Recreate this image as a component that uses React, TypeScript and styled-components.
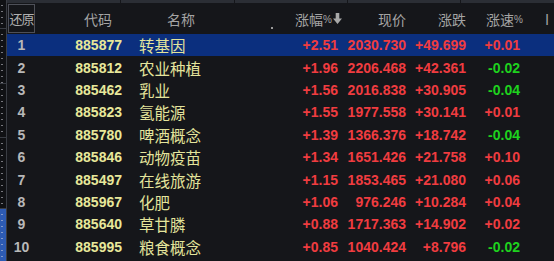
import React from 'react';
import styled, { createGlobalStyle } from 'styled-components';

type Row = {
  code: string;
  name: string;
  pct: string;
  price: string;
  change: string;
  speed: string;
};

const rows: Row[] = [
  { code: '885877', name: '转基因', pct: '+2.51', price: '2030.730', change: '+49.699', speed: '+0.01' },
  { code: '885812', name: '农业种植', pct: '+1.96', price: '2206.468', change: '+42.361', speed: '-0.02' },
  { code: '885462', name: '乳业', pct: '+1.56', price: '2016.838', change: '+30.905', speed: '-0.04' },
  { code: '885823', name: '氢能源', pct: '+1.55', price: '1977.558', change: '+30.141', speed: '+0.01' },
  { code: '885780', name: '啤酒概念', pct: '+1.39', price: '1366.376', change: '+18.742', speed: '-0.04' },
  { code: '885846', name: '动物疫苗', pct: '+1.34', price: '1651.426', change: '+21.758', speed: '+0.10' },
  { code: '885497', name: '在线旅游', pct: '+1.15', price: '1853.465', change: '+21.080', speed: '+0.06' },
  { code: '885967', name: '化肥', pct: '+1.06', price: '976.246', change: '+10.284', speed: '+0.04' },
  { code: '885640', name: '草甘膦', pct: '+0.88', price: '1717.363', change: '+14.902', speed: '+0.02' },
  { code: '885995', name: '粮食概念', pct: '+0.85', price: '1040.424', change: '+8.796', speed: '-0.02' },
];

const COLS = '28px 87px 168px 48px 68px 60px 54px 1fr';

const GlobalStyle = createGlobalStyle`
  html, body {
    margin: 0;
    padding: 0;
    background: #15161a;
    overflow: hidden;
  }
`;

const App: React.FC = () => {
  return (
    <>
      <GlobalStyle />
      <Screen>
        <LeftStrip>
          <StripSeg $h={28} />
          <StripSeg $h={54} />
          <StripSeg $h={53} />
          <StripSeg $h={70} />
          <StripSeg $h={56} $active />
        </LeftStrip>
        <Main>
          <TopBar>
            <TopSeg $w={113} />
            <TopSeg $w={113} />
            <TopSeg $w={112} />
            <TopSeg $w={112} />
            <TopSeg $w={97} />
          </TopBar>
          <HeaderRow>
            <ResetBox>还原</ResetBox>
            <HeadCell $inset={10}>代码</HeadCell>
            <HeadCell $left $pl={45}>
              名称
              <ResizeDot />
            </HeadCell>
            <HeadCell $shift={4}>
              涨幅<Small>%</Small>
              <ArrowDown viewBox="0 0 10 12">
                <path d="M3 0h4v6h3L5 12 0 6h3z" fill="#a8a8a8" />
              </ArrowDown>
            </HeadCell>
            <HeadCell>现价</HeadCell>
            <HeadCell>涨跌</HeadCell>
            <HeadCell $shift={3}>
              涨速<Small>%</Small>
            </HeadCell>
            <HeadCell $left $pl={25}>I</HeadCell>
          </HeaderRow>
          {rows.map((r, i) => (
            <DataRow key={r.code} $selected={i === 0}>
              <IndexCell>{i + 1}</IndexCell>
              <CodeCell>{r.code}</CodeCell>
              <NameCell>{r.name}</NameCell>
              <NumCell $color={colorOf(r.pct)}>{r.pct}</NumCell>
              <NumCell $color={colorOf(r.change)}>{r.price}</NumCell>
              <NumCell $color={colorOf(r.change)}>{r.change}</NumCell>
              <NumCell $color={colorOf(r.speed)}>{r.speed}</NumCell>
              <span />
            </DataRow>
          ))}
        </Main>
      </Screen>
    </>
  );
};

const colorOf = (v: string) => (v.startsWith('-') ? '#1ed21e' : '#f03c40');

const Screen = styled.div`
  display: flex;
  width: 554px;
  height: 261px;
  background: #15161a;
  overflow: hidden;
`;

const LeftStrip = styled.div`
  width: 6px;
  flex: none;
  display: flex;
  flex-direction: column;
  border-right: 1px solid #3a3d44;
  background: #101114;
`;

const StripSeg = styled.div<{ $h: number; $active?: boolean }>`
  height: ${({ $h }) => $h}px;
  flex: none;
  border-bottom: 1px solid #3a3d44;
  background: ${({ $active }) => ($active ? '#2d5bb4' : 'transparent')};
  background-image: repeating-linear-gradient(
    to bottom,
    transparent 0 5px,
    rgba(220, 220, 230, 0.5) 5px 6px
  );
  background-size: 2px 100%;
  background-repeat: no-repeat;
  background-position: 1px 0;
`;

const Main = styled.div`
  flex: 1;
  display: flex;
  flex-direction: column;
`;

const TopBar = styled.div`
  display: flex;
  height: 3px;
  background: #2b2e35;
`;

const TopSeg = styled.div<{ $w: number }>`
  width: ${({ $w }) => $w}px;
  border-right: 1px solid #15161a;
`;

const HeaderRow = styled.div`
  display: grid;
  grid-template-columns: ${COLS};
  height: 31px;
  align-items: stretch;
  font-family: 'Noto Sans CJK SC', 'Liberation Sans', sans-serif;
  font-size: 14px;
  color: #a4a4a4;
`;

const ResetBox = styled.div`
  margin: 1px 0 1px 1px;
  border: 1px solid #4e5058;
  display: flex;
  align-items: center;
  justify-content: center;
  font-size: 13px;
  letter-spacing: -1px;
  color: #b0b0b0;
`;

const HeadCell = styled.div<{ $left?: boolean; $pl?: number; $inset?: number; $shift?: number }>`
  position: relative;
  display: flex;
  align-items: center;
  justify-content: ${({ $left }) => ($left ? 'flex-start' : 'flex-end')};
  padding-left: ${({ $pl }) => $pl ?? 0}px;
  padding-right: ${({ $inset }) => $inset ?? 0}px;
  margin-right: ${({ $shift }) => -($shift ?? 0)}px;
  white-space: nowrap;
`;

const Small = styled.span`
  font-size: 10px;
  font-family: 'Liberation Sans', sans-serif;
  margin-top: 2px;
`;

const ArrowDown = styled.svg`
  width: 9px;
  height: 11px;
  margin-left: 1px;
`;

const ResizeDot = styled.span`
  position: absolute;
  right: 17px;
  bottom: 5px;
  width: 2px;
  height: 2px;
  background: #9a9a9a;
`;

const DataRow = styled.div<{ $selected?: boolean }>`
  display: grid;
  grid-template-columns: ${COLS};
  height: 22.4px;
  align-items: center;
  background: ${({ $selected }) => ($selected ? '#0b2f7e' : 'transparent')};
  font-family: 'Liberation Sans', Arial, sans-serif;
  font-weight: 700;
  font-size: 14px;
  white-space: nowrap;
`;

const IndexCell = styled.span`
  text-align: center;
  color: #b8b8b8;
  padding-left: 1px;
`;

const CodeCell = styled.span`
  text-align: right;
  color: #e8e89a;
`;

const NameCell = styled.span`
  padding-left: 17px;
  font-family: 'Noto Sans CJK SC', sans-serif;
  font-weight: 400;
  font-size: 15.5px;
  color: #e4e49c;
`;

const NumCell = styled.span<{ $color: string }>`
  text-align: right;
  color: ${({ $color }) => $color};
`;

export default App;
